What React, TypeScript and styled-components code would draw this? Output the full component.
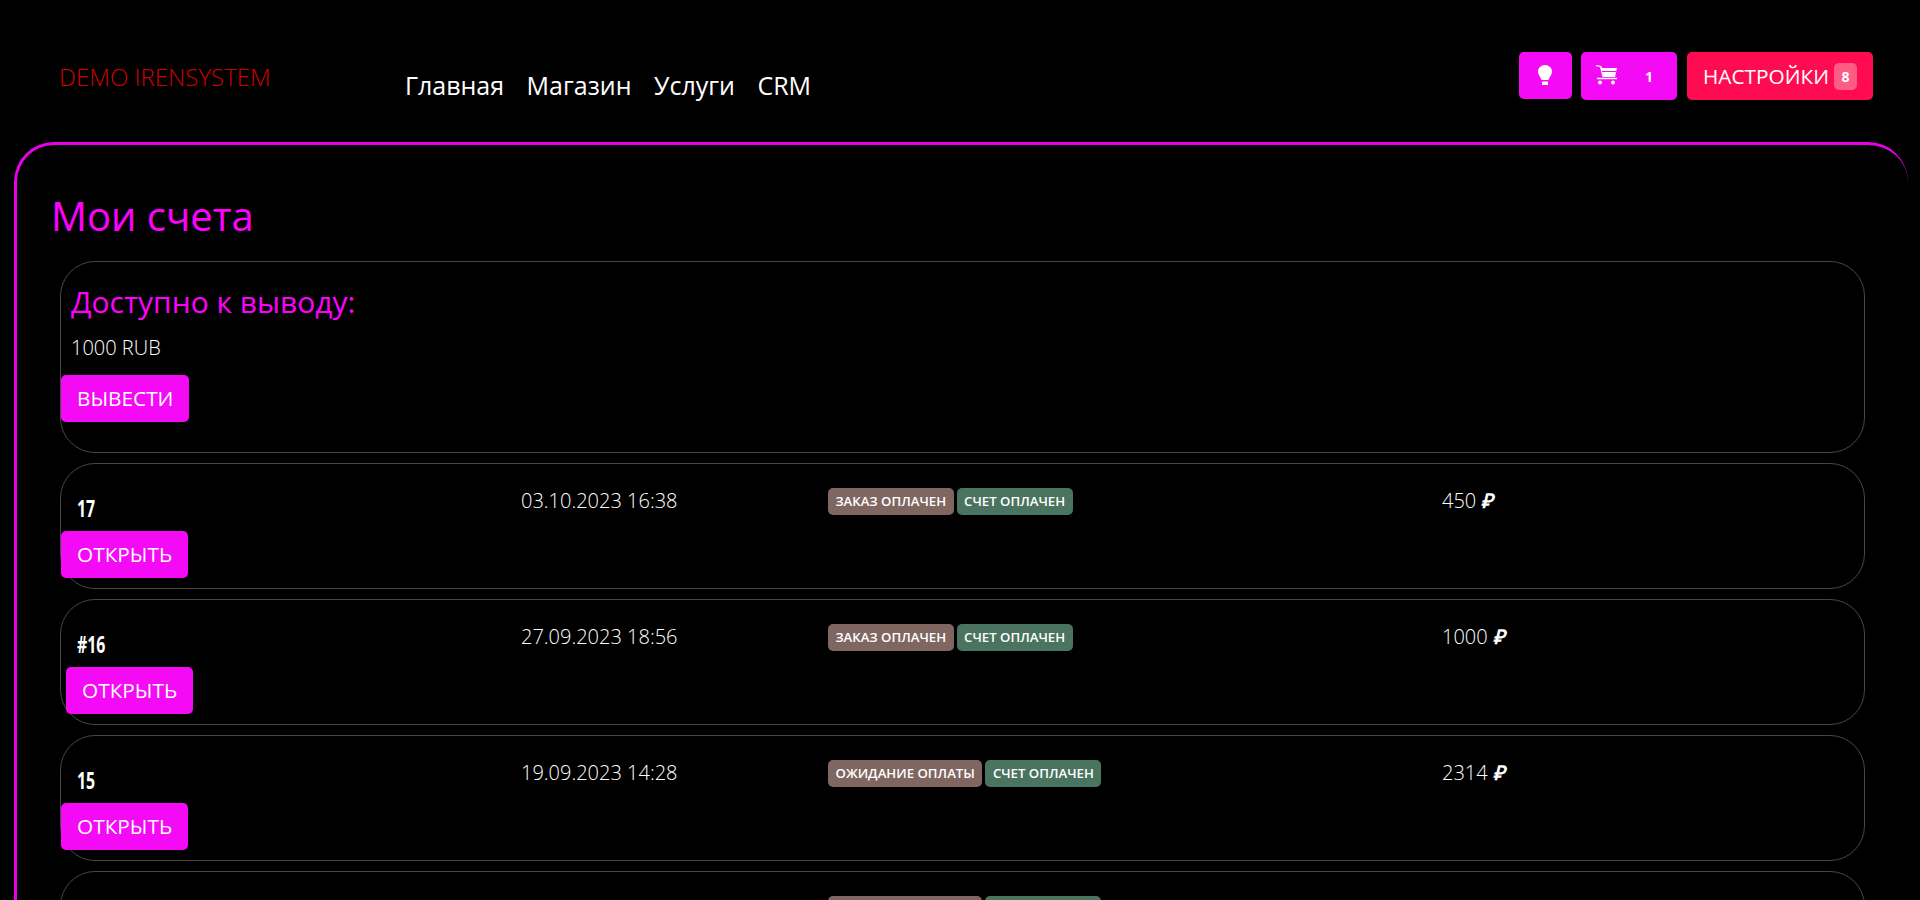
import React from "react";
import styled, { createGlobalStyle } from "styled-components";

const GlobalStyle = createGlobalStyle`
  html, body {
    margin: 0;
    height: 100%;
    overflow: hidden;
    background: #000;
    color: #fff;
    font-family: "Open Sans", "Liberation Sans", sans-serif;
  }
`;

const Header = styled.header`
  display: flex;
  align-items: flex-start;
  height: 142px;
  padding: 52px 47px 0 59px;
  box-sizing: border-box;
`;

const Logo = styled.a`
  width: 346px;
  margin-top: 9px;
  font-size: 24px;
  font-weight: 300;
  line-height: 32px;
  color: #d00000;
`;

const Nav = styled.nav`
  display: flex;
  gap: 22.5px;
  flex: 1;
  margin-top: 16px;
`;

const NavLink = styled.a`
  font-size: 25px;
  line-height: 34px;
  color: #fff;
`;

const Tools = styled.div`
  display: flex;
  align-items: flex-start;
  gap: 9px;
`;

const ToolButton = styled.button<{ $wide?: boolean }>`
  display: flex;
  align-items: center;
  justify-content: ${(p) => (p.$wide ? "flex-start" : "center")};
  width: ${(p) => (p.$wide ? "96px" : "53px")};
  height: ${(p) => (p.$wide ? "48px" : "47px")};
  padding: ${(p) => (p.$wide ? "0 0 2px 15px" : "0 0 2px")};
  border: 0;
  border-radius: 5px;
  background: #f50af5;
  color: #fff;
`;

const CartCount = styled.span`
  margin: 2px 0 0 28px;
  font-family: "Open Sans", sans-serif;
  font-size: 14px;
  font-weight: 700;
`;

const SettingsButton = styled.button`
  display: flex;
  align-items: center;
  gap: 5px;
  height: 48px;
  margin-left: 1px;
  padding: 0 16px;
  border: 0;
  border-radius: 5px;
  background: #ff0b51;
  color: #fff;
  font-family: inherit;
  font-size: 20.8px;
`;

const SettingsBadge = styled.span`
  display: flex;
  align-items: center;
  justify-content: center;
  width: 23px;
  height: 27px;
  border-radius: 5px;
  background: #ff5c85;
  font-size: 14px;
  font-weight: 700;
`;

const Panel = styled.main`
  margin: 0 12px 0 14px;
  padding: 44px 43px 0 34px;
  min-height: 900px;
  border-top: 3px solid #e800e8;
  border-left: 3px solid #e800e8;
  border-top-left-radius: 40px;
  border-top-right-radius: 40px;
`;

const Title = styled.h1`
  margin: 0 0 18px;
  font-size: 40px;
  font-weight: 400;
  line-height: 54px;
  color: #f0f;
`;

const CardList = styled.div`
  display: flex;
  flex-direction: column;
  gap: 10px;
  margin-left: 9px;
`;

const Card = styled.section`
  border: 1px solid #474747;
  border-radius: 35px;
`;

const BalanceCard = styled(Card)`
  height: 190px;
`;

const BalanceTitle = styled.h3`
  margin: 21px 0 0 10px;
  font-size: 30px;
  font-weight: 400;
  line-height: 38px;
  color: #f0f;
`;

const BalanceValue = styled.p`
  margin: 15px 0 15px 10px;
  font-size: 20px;
  font-weight: 350;
  line-height: 24px;
`;

const ActionButton = styled.button<{ $shift?: boolean }>`
  display: block;
  height: 47px;
  margin-left: ${(p) => (p.$shift ? "5px" : "0")};
  padding: 0 16px;
  border: 0;
  border-radius: 5px;
  background: #f50af5;
  color: #fff;
  font-family: inherit;
  font-size: 20.8px;
  line-height: 47px;
`;

const InvoiceRow = styled(Card)`
  display: grid;
  grid-template-columns: 460px 307px 614px 1fr;
  height: 124px;
`;

const InvoiceLead = styled.div`
  padding-top: 30px;
`;

const InvoiceNumber = styled.div`
  margin: 0 0 9px 16px;
  font-size: 24px;
  font-weight: 700;
  line-height: 28px;
  transform: scaleX(0.66);
  transform-origin: left center;
`;

const InvoiceDate = styled.div`
  padding-top: 25px;
  font-size: 20px;
  font-weight: 350;
  line-height: 24px;
`;

const Badges = styled.div`
  display: flex;
  align-items: flex-start;
  gap: 3px;
  padding-top: 24px;
`;

const Badge = styled.span<{ $tone: "order" | "paid" }>`
  height: 27px;
  padding: 0 7.5px;
  border-radius: 5px;
  background: ${(p) => (p.$tone === "order" ? "#806660" : "#4a7360")};
  font-size: 13.2px;
  font-weight: 600;
  line-height: 27px;
`;

const Amount = styled.div`
  padding-top: 25px;
  font-size: 20px;
  font-weight: 350;
  line-height: 24px;
`;

const Ruble = styled.i`
  font-family: "Liberation Sans", sans-serif;
  font-weight: 700;
  font-size: 20px;
`;

const BulbIcon = () => (
  <svg width="14" height="20" viewBox="0 0 14 20" fill="#fff">
    <path d="M7 0C3 0 0 3 0 6.500c0 3 2 4.500 3.500 8.500h7c1.500-4 3.500-5.500 3.500-8.500C14 3 11 0 7 0z" />
    <rect x="4" y="16.500" width="6" height="3.500" />
  </svg>
);

const CartIcon = () => (
  <svg width="21" height="20" viewBox="0 0 21 20" fill="#fff">
    <path d="M0 0l5.500 1L6 3h15l-2 9H6.500L4 2 0 1.300z" />
    <rect x="6" y="6" width="14" height="1" fill="#f50af5" />
    <rect x="1" y="12.800" width="20" height="1.400" />
    <circle cx="4" cy="17.500" r="2" />
    <circle cx="17" cy="17.500" r="2" />
  </svg>
);

const invoices = [
  { id: "17", date: "03.10.2023 16:38", order: "ЗАКАЗ ОПЛАЧЕН", amount: "450" },
  { id: "#16", date: "27.09.2023 18:56", order: "ЗАКАЗ ОПЛАЧЕН", amount: "1000", shift: true },
  { id: "15", date: "19.09.2023 14:28", order: "ОЖИДАНИЕ ОПЛАТЫ", amount: "2314" },
  { id: "14", date: "12.09.2023 11:02", order: "ОЖИДАНИЕ ОПЛАТЫ", amount: "1200" },
];

const App: React.FC = () => {
  return (
    <>
      <GlobalStyle />
      <Header>
        <Logo>DEMO IRENSYSTEM</Logo>
        <Nav>
          <NavLink>Главная</NavLink>
          <NavLink>Магазин</NavLink>
          <NavLink>Услуги</NavLink>
          <NavLink>CRM</NavLink>
        </Nav>
        <Tools>
          <ToolButton>
            <BulbIcon />
          </ToolButton>
          <ToolButton $wide>
            <CartIcon />
            <CartCount>1</CartCount>
          </ToolButton>
          <SettingsButton>
            НАСТРОЙКИ
            <SettingsBadge>8</SettingsBadge>
          </SettingsButton>
        </Tools>
      </Header>
      <Panel>
        <Title>Мои счета</Title>
        <CardList>
          <BalanceCard>
            <BalanceTitle>Доступно к выводу:</BalanceTitle>
            <BalanceValue>1000 RUB</BalanceValue>
            <ActionButton>ВЫВЕСТИ</ActionButton>
          </BalanceCard>
          {invoices.map((row) => (
            <InvoiceRow key={row.id}>
              <InvoiceLead>
                <InvoiceNumber>{row.id}</InvoiceNumber>
                <ActionButton $shift={row.shift}>ОТКРЫТЬ</ActionButton>
              </InvoiceLead>
              <InvoiceDate>{row.date}</InvoiceDate>
              <Badges>
                <Badge $tone="order">{row.order}</Badge>
                <Badge $tone="paid">СЧЕТ ОПЛАЧЕН</Badge>
              </Badges>
              <Amount>
                {row.amount} <Ruble>₽</Ruble>
              </Amount>
            </InvoiceRow>
          ))}
        </CardList>
      </Panel>
    </>
  );
};

export default App;
